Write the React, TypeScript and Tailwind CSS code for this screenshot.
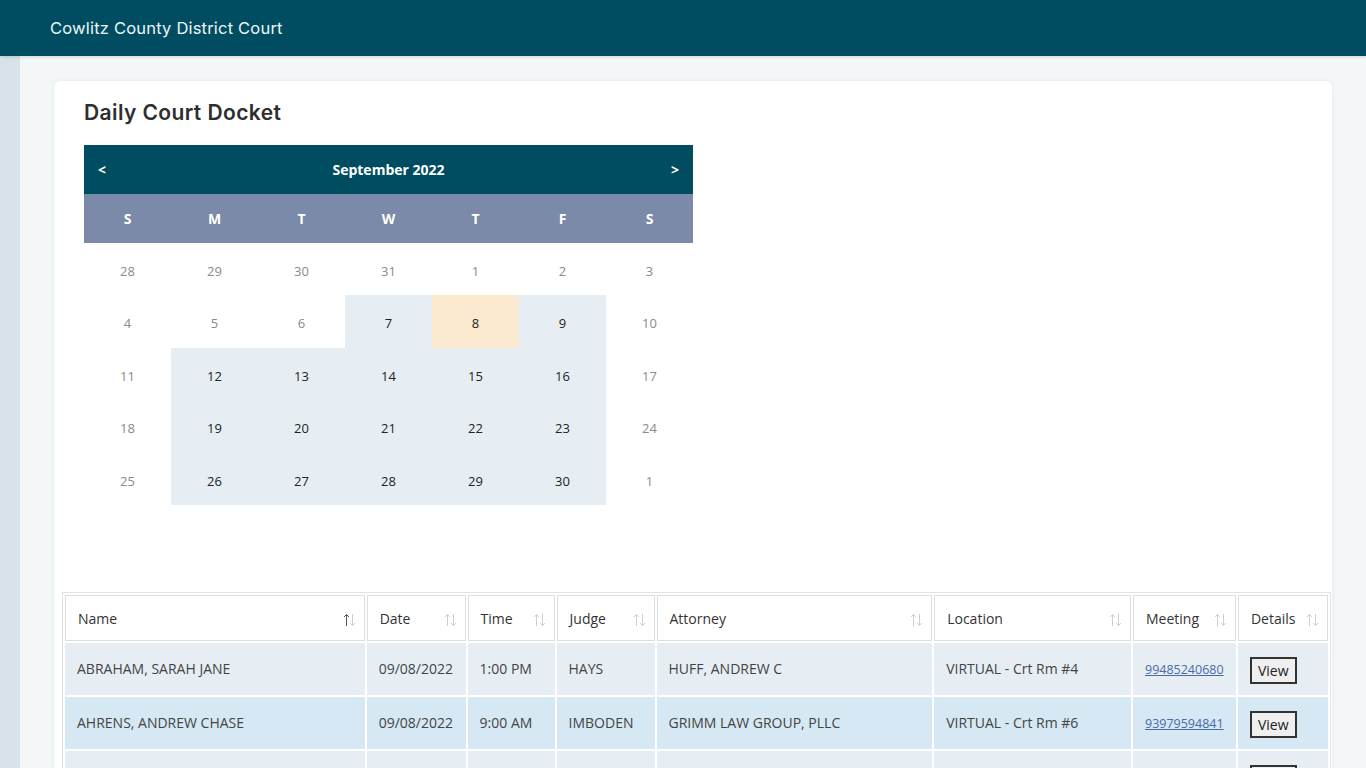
import React from 'react';

const font = { fontFamily: '"Open Sans", "Noto Sans", sans-serif' };

type Day = { n: number; muted?: boolean; hl?: boolean; today?: boolean };

const weeks: Day[][] = [
  [{ n: 28, muted: true }, { n: 29, muted: true }, { n: 30, muted: true }, { n: 31, muted: true }, { n: 1, muted: true }, { n: 2, muted: true }, { n: 3, muted: true }],
  [{ n: 4, muted: true }, { n: 5, muted: true }, { n: 6, muted: true }, { n: 7, hl: true }, { n: 8, today: true }, { n: 9, hl: true }, { n: 10, muted: true }],
  [{ n: 11, muted: true }, { n: 12, hl: true }, { n: 13, hl: true }, { n: 14, hl: true }, { n: 15, hl: true }, { n: 16, hl: true }, { n: 17, muted: true }],
  [{ n: 18, muted: true }, { n: 19, hl: true }, { n: 20, hl: true }, { n: 21, hl: true }, { n: 22, hl: true }, { n: 23, hl: true }, { n: 24, muted: true }],
  [{ n: 25, muted: true }, { n: 26, hl: true }, { n: 27, hl: true }, { n: 28, hl: true }, { n: 29, hl: true }, { n: 30, hl: true }, { n: 1, muted: true }],
];

const columns = [
  { label: 'Name', w: 'w-[300px]', active: true },
  { label: 'Date', w: 'w-[99px]' },
  { label: 'Time', w: 'w-[87px]' },
  { label: 'Judge', w: 'w-[98px]' },
  { label: 'Attorney', w: 'w-[276px]' },
  { label: 'Location', w: 'w-[197px]' },
  { label: 'Meeting', w: 'w-[103px]' },
  { label: 'Details', w: 'w-[90px]' },
];

const rows = [
  ['ABRAHAM, SARAH JANE', '09/08/2022', '1:00 PM', 'HAYS', 'HUFF, ANDREW C', 'VIRTUAL - Crt Rm #4', '99485240680'],
  ['AHRENS, ANDREW CHASE', '09/08/2022', '9:00 AM', 'IMBODEN', 'GRIMM LAW GROUP, PLLC', 'VIRTUAL - Crt Rm #6', '93979594841'],
  ['', '', '', '', '', '', ''],
];

function SortIcon({ active }: { active?: boolean }) {
  const up = active ? '#555' : '#cfcfcf';
  return (
    <svg width="13" height="14" viewBox="0 0 13 14" fill="none" strokeWidth="1" className="mr-[2px] mt-[2px]">
      <path d="M3.5 13V1.5M1 4l2.5-2.5L6 4" stroke={up} />
      <path d="M9.5 1v11.5M7 10l2.5 2.5L12 10" stroke="#cfcfcf" />
    </svg>
  );
}

export default function App() {
  return (
    <div className="min-h-screen bg-[#f3f7f8]" style={font}>
      <header className="h-14 bg-[#004d61] flex items-center pl-[50px] shadow-[0_1px_3px_rgba(0,0,0,0.15)] relative z-10">
        <span
          className="text-[#eef5f7] text-[16.5px] tracking-[0.2px]"
          style={{ fontFamily: 'Inter, "Noto Sans", sans-serif' }}
        >
          Cowlitz County District Court
        </span>
      </header>
      <div className="flex">
        <aside className="w-5 shrink-0 bg-[#d8e3e9] min-h-[712px]" />
        <main className="flex-1 pt-[25px] pl-[34px] pr-[34px]">
          <div className="bg-white rounded-md shadow-[0_0_4px_rgba(0,0,0,0.08)] pt-[18px] pb-4 pl-2 pr-[1px]">
            <h1
              className="pl-[22px] text-[21px] font-semibold text-[#2e2e2e] leading-7 tracking-[0.4px]"
              style={{ fontFamily: 'Inter, "Noto Sans", sans-serif' }}
            >
              Daily Court Docket
            </h1>
            <div className="ml-[22px] mt-[18px] w-[609px]">
              <div className="h-[49px] bg-[#004d61] flex items-center justify-between px-[14px] text-white text-sm font-bold">
                <span>&lt;</span>
                <span>September 2022</span>
                <span>&gt;</span>
              </div>
              <div className="h-[49px] bg-[#7a8aa8] grid grid-cols-7 items-center text-white text-sm font-bold text-center">
                {['S', 'M', 'T', 'W', 'T', 'F', 'S'].map((d, i) => (
                  <span key={i}>{d}</span>
                ))}
              </div>
              <div className="grid grid-cols-7">
                {weeks.flat().map((d, i) => (
                  <div
                    key={i}
                    className={
                      'h-[52.4px] flex items-center justify-center pt-[5px] text-[13px] ' +
                      (d.today ? 'bg-[#fbe9cf] text-[#222]' : d.hl ? 'bg-[#e6eef4] text-[#222]' : 'text-[#8a8a8a]')
                    }
                  >
                    {d.n}
                  </div>
                ))}
              </div>
            </div>
            <div className="mt-[87px] border border-[#e2e2e2] h-[180px] overflow-hidden">
              <table className="border-separate border-spacing-[2px] w-full text-sm">
                <thead>
                  <tr>
                    {columns.map((c) => (
                      <th
                        key={c.label}
                        className={c.w + ' h-[46px] border border-[#dedede] bg-white text-left font-normal text-[#333] pl-[12px] pr-[6px] pt-[2px]'}
                      >
                        <div className="flex items-center justify-between">
                          <span>{c.label}</span>
                          <SortIcon active={c.active} />
                        </div>
                      </th>
                    ))}
                  </tr>
                </thead>
                <tbody>
                  {rows.map((r, ri) => (
                    <tr key={ri} className={ri % 2 === 1 ? 'bg-[#d5e8f3]' : 'bg-[#e6eef4]'}>
                      {r.map((v, ci) => (
                        <td key={ci} className="h-[52px] pl-[12px] text-[#444]">
                          {ci === 6 ? (
                            <a href="#" className="text-[12.5px] text-[#4a6aa5] underline">
                              {v}
                            </a>
                          ) : (
                            v
                          )}
                        </td>
                      ))}
                      <td className="h-[52px] pl-[12px]">
                        <button className="border-2 border-[#333] bg-[#efefef] text-[#222] px-[6px] text-sm leading-[23px] mt-[3px]">
                          View
                        </button>
                      </td>
                    </tr>
                  ))}
                </tbody>
              </table>
            </div>
          </div>
        </main>
      </div>
    </div>
  );
}
